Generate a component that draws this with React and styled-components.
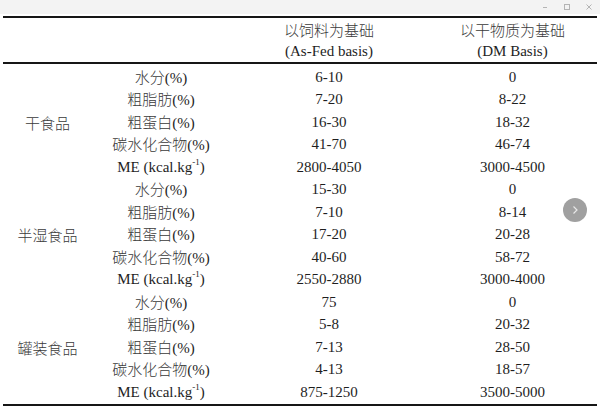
import React from 'react';
import styled, { createGlobalStyle } from 'styled-components';

const GlobalStyle = createGlobalStyle`
    html, body {
        margin: 0;
        padding: 0;
        background: #ffffff;
    }
    body {
        font-family: "Liberation Serif", "Noto Sans CJK SC", serif;
        color: #1e1e1e;
    }
`;

const Page = styled.div`
    position: relative;
    width: 600px;
    height: 408px;
    overflow: hidden;
    background: #ffffff;
`;

const TitleBar = styled.div`
    height: 14px;
    background: #f3f3f3;
    display: flex;
    justify-content: flex-end;
    align-items: center;
    gap: 14px;
    padding-right: 7px;
`;

const WinButton = styled.svg`
    width: 8px;
    height: 8px;
    display: block;
`;

const Table = styled.div`
    margin: 2px 3px 0 3px;
    border-top: 2px solid #161616;
    border-bottom: 2px solid #161616;
`;

const Grid = styled.div`
    display: grid;
    grid-template-columns: 89px 138px 198px 1fr;
    grid-auto-rows: ${(p) => p.$rowHeight};
    font-size: 15px;
`;

const Header = styled(Grid)`
    border-bottom: 2px solid #161616;
`;

const Body = styled.div`
    padding-top: 2px;
`;

const Cell = styled.div`
    display: flex;
    align-items: center;
    justify-content: center;
    white-space: nowrap;
    grid-column: ${(p) => p.$col};
    grid-row: ${(p) => p.$row || 'auto'};
    line-height: 1;
`;

// Chinese characters: the reference uses a thin Song face, so keep them light
const Han = styled.span`
    font-family: "Noto Sans CJK SC", sans-serif;
    font-weight: 300;
    color: #3a3a3a;
    letter-spacing: ${(p) => p.$spread || '0'};
`;

const Sup = styled.sup`
    font-size: 9px;
    vertical-align: top;
    position: relative;
    top: -2px;
`;

const NextButton = styled.div`
    position: absolute;
    left: 563px;
    top: 198px;
    width: 24px;
    height: 24px;
    border-radius: 50%;
    background: #a0a0a0;
    display: flex;
    align-items: center;
    justify-content: center;
`;

const groups = [
    {
        name: '干食品',
        rows: [
            ['水分', '6-10', '0'],
            ['粗脂肪', '7-20', '8-22'],
            ['粗蛋白', '16-30', '18-32'],
            ['碳水化合物', '41-70', '46-74'],
            ['ME', '2800-4050', '3000-4500'],
        ],
    },
    {
        name: '半湿食品',
        rows: [
            ['水分', '15-30', '0'],
            ['粗脂肪', '7-10', '8-14'],
            ['粗蛋白', '17-20', '20-28'],
            ['碳水化合物', '40-60', '58-72'],
            ['ME', '2550-2880', '3000-4000'],
        ],
    },
    {
        name: '罐装食品',
        rows: [
            ['水分', '75', '0'],
            ['粗脂肪', '5-8', '20-32'],
            ['粗蛋白', '7-13', '28-50'],
            ['碳水化合物', '4-13', '18-57'],
            ['ME', '875-1250', '3500-5000'],
        ],
    },
];

function Label({ text }) {
    if (text === 'ME') {
        return (
            <span>
                ME (kcal.kg<Sup>-1</Sup>)
            </span>
        );
    }
    return (
        <span>
            <Han>{text}</Han>(%)
        </span>
    );
}

function App() {
    return (
        <Page>
            <GlobalStyle />
            <TitleBar>
                <WinButton viewBox="0 0 8 8">
                    <line x1="2" y1="4.5" x2="6" y2="4.5" stroke="#b4b4b4" strokeWidth="1" />
                </WinButton>
                <WinButton viewBox="0 0 8 8">
                    <rect x="1.5" y="1.5" width="5" height="5" fill="none" stroke="#b4b4b4" strokeWidth="1" />
                </WinButton>
                <WinButton viewBox="0 0 8 8">
                    <path d="M1.5 1.5 L6.5 6.5 M6.5 1.5 L1.5 6.5" stroke="#b4b4b4" strokeWidth="1" />
                </WinButton>
            </TitleBar>

            <Table>
                <Header $rowHeight="22px">
                    <Cell $col={3} $row={1}><Han>以饲料为基础</Han></Cell>
                    <Cell $col={4} $row={1}><Han>以干物质为基础</Han></Cell>
                    <Cell $col={3} $row={2}>(As-Fed basis)</Cell>
                    <Cell $col={4} $row={2}>(DM Basis)</Cell>
                </Header>
                <Body>
                    {groups.map((group) => (
                        <Grid key={group.name} $rowHeight="22.5px">
                            <Cell $col={1} $row="1 / span 5">
                                <Han>{group.name}</Han>
                            </Cell>
                            {group.rows.map((row, i) => (
                                <React.Fragment key={i}>
                                    <Cell $col={2} $row={i + 1}>
                                        <Label text={row[0]} />
                                    </Cell>
                                    <Cell $col={3} $row={i + 1}>{row[1]}</Cell>
                                    <Cell $col={4} $row={i + 1}>{row[2]}</Cell>
                                </React.Fragment>
                            ))}
                        </Grid>
                    ))}
                </Body>
            </Table>

            <NextButton>
                <svg width="10" height="10" viewBox="0 0 10 10">
                    <path d="M3.5 1.5 L7 5 L3.5 8.5" fill="none" stroke="#e8e8e8" strokeWidth="1.2" />
                </svg>
            </NextButton>
        </Page>
    );
}

export default App;
